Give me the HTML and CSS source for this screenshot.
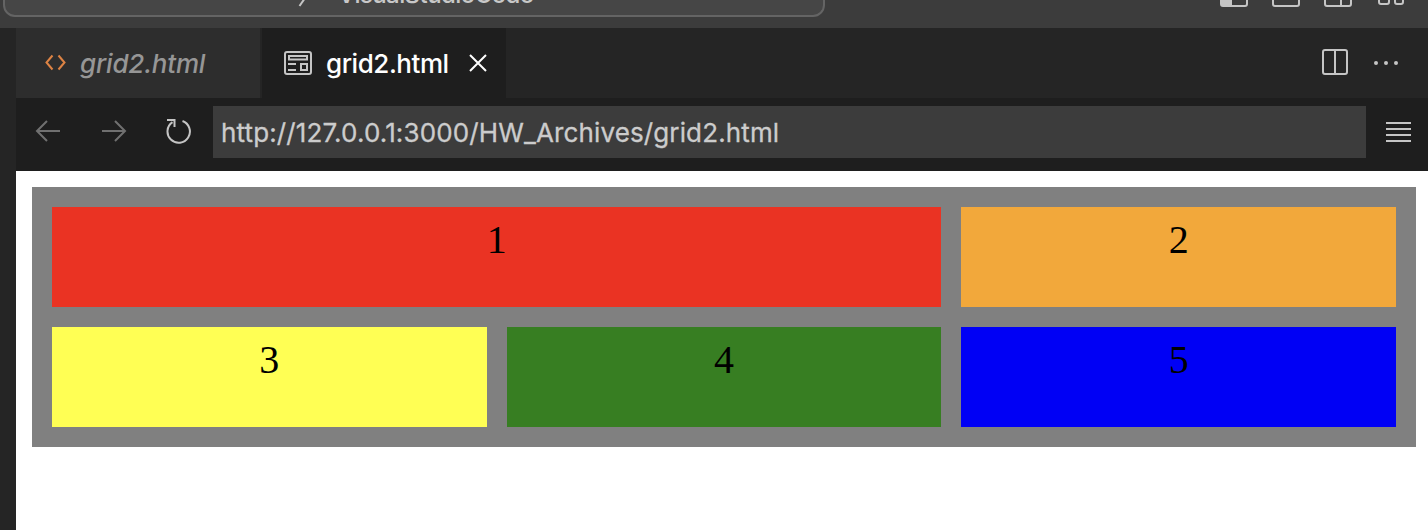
FILE: index.html
```html
<!DOCTYPE html>
<html lang="en">
<head>
<meta charset="utf-8">
<title>grid2.html</title>
<link rel="stylesheet" href="styles.css">
</head>
<body>
<header class="titlebar">
  <div class="command">
    <svg class="slash" width="20" height="28" viewBox="0 0 20 28"><path d="M3.500 27L16 9"/></svg>
    <span class="command-text">VisualStudioCode</span>
  </div>
  <div class="layout-icons">
    <svg width="28" height="28" viewBox="0 0 28 28"><rect x="1" y="1" width="26" height="26" rx="2"/><path class="solid" d="M1 1H12V27H1z"/></svg>
    <svg width="28" height="28" viewBox="0 0 28 28"><rect x="1" y="1" width="26" height="26" rx="2"/></svg>
    <svg width="28" height="28" viewBox="0 0 28 28"><rect x="1" y="1" width="26" height="26" rx="2"/><path d="M17 1V27"/></svg>
    <svg width="28" height="28" viewBox="0 0 28 28"><rect x="3" y="14" width="10" height="11" rx="2"/><rect x="19" y="14" width="8" height="11" rx="2"/></svg>
  </div>
</header>
<div class="workspace">
  <main class="editor">
    <div class="tabs">
      <div class="tab tab-preview">
        <svg class="code" width="22" height="18" viewBox="0 0 22 18"><path d="M8.500 1.500L2.500 8.500L8.500 15.500M14.500 1.500L20.500 8.500L14.500 15.500"/></svg>
        <span class="tab-label">grid2.html</span>
      </div>
      <div class="tab tab-active">
        <svg class="page" width="28" height="24" viewBox="0 0 28 24"><rect x="1" y="1" width="26" height="22" rx="2"/><path d="M5 5H23V8.500H5zM4 13H12M4 19H12M17 13H23V19H17z"/></svg>
        <span class="tab-label">grid2.html</span>
        <svg class="close" width="18" height="18" viewBox="0 0 18 18"><path d="M1 1L17 17M17 1L1 17"/></svg>
      </div>
      <div class="actions">
        <svg width="26" height="26" viewBox="0 0 26 26"><rect x="1" y="1" width="24" height="24" rx="2"/><path d="M13 1V25"/></svg>
        <svg width="26" height="26" viewBox="0 0 26 26"><g class="solid"><circle cx="3" cy="14" r="2"/><circle cx="13" cy="14" r="2"/><circle cx="23" cy="14" r="2"/></g></svg>
      </div>
    </div>
    <nav class="toolbar">
      <svg class="dim" width="26" height="24" viewBox="0 0 26 24"><path d="M25 12H2M12 2L2 12L12 22"/></svg>
      <svg class="dim" width="26" height="24" viewBox="0 0 26 24"><path d="M1 12H24M14 2L24 12L14 22"/></svg>
      <svg class="reload" width="26" height="26" viewBox="0 0 26 26"><path d="M1 2H8.500V9M6.500 4.200A11.200 11.200 0 1 0 16.500 3"/></svg>
      <div class="address">http://127.0.0.1:3000/HW_Archives/grid2.html</div>
      <svg class="menu" width="25" height="20" viewBox="0 0 25 20"><path d="M0 1H25M0 7H25M0 13H25M0 19H25"/></svg>
    </nav>
    <section class="preview">
      <div class="grid">
        <div class="cell red">1</div>
        <div class="cell orange">2</div>
        <div class="cell yellow">3</div>
        <div class="cell green">4</div>
        <div class="cell blue">5</div>
      </div>
    </section>
  </main>
</div>
</body>
</html>
```
FILE: styles.css
```css
* { box-sizing: border-box; }
body {
  margin: 0;
  height: 530px;
  overflow: hidden;
  display: flex;
  flex-direction: column;
  background: #252525;
  font-family: Inter, "Liberation Sans", sans-serif;
}
svg {
  display: block;
  flex: none;
  fill: none;
  stroke: #c5c5c5;
  stroke-width: 2;
}
.solid { fill: #c5c5c5; stroke: none; }
.titlebar {
  height: 28px;
  flex: none;
  overflow: hidden;
  display: flex;
  align-items: flex-start;
  justify-content: space-between;
  padding: 0 24px 0 3px;
  background: #3c3c3c;
}
.command {
  width: 822px;
  height: 44px;
  margin-top: -27px;
  border: 2px solid #646464;
  border-radius: 12px;
  background: #464646;
  display: flex;
  padding-left: 291px;
}
.slash { margin-top: 4px; }
.command-text {
  margin: 5px 0 0 22px;
  font-size: 24px;
  font-weight: 500;
  letter-spacing: -0.58px;
  line-height: 30px;
  color: #c8c8c8;
}
.layout-icons {
  display: flex;
  gap: 24px;
  margin-top: -21px;
}
.workspace { flex: 1; padding-left: 16px; }
.editor { height: 100%; display: flex; flex-direction: column; background: #1e1e1e; }
.tabs { height: 70px; flex: none; display: flex; background: #252525; }
.tab { display: flex; align-items: center; }
.tab-label {
  padding-top: 2px;
  font-size: 26px;
  font-weight: 500;
  letter-spacing: -0.45px;
  line-height: 34px;
  white-space: nowrap;
}
.tab-preview {
  width: 246px;
  padding: 0 0 0 28px;
  background: #2d2d2d;
  border-right: 2px solid #252525;
  color: #969696;
  font-style: italic;
}
.tab-preview .tab-label { letter-spacing: -0.2px; }
.code { stroke: #dd8344; margin-right: 14px; }
.tab-active { width: 244px; padding-left: 22px; background: #1e1e1e; color: #fff; }
.page { margin-right: 14px; }
.tab-active .tab-label { width: 125px; }
.close { stroke: #fff; margin-left: 18px; }
.actions { margin-left: auto; padding: 21px 29px 0 0; display: flex; gap: 25px; }
.toolbar { height: 73px; flex: none; display: flex; padding: 8px 17px 0 19px; }
.dim { stroke: #707070; margin: 13px 40px 0 0; }
.reload { margin: 12px 21px 0 -1px; }
.address {
  flex: 1;
  height: 52px;
  padding: 1px 0 0 8px;
  margin-right: 20px;
  background: #3c3c3c;
  color: #ccc;
  font-size: 26px;
  letter-spacing: 0.13px;
  line-height: 52px;
  white-space: nowrap;
  -webkit-text-stroke: 0.3px #ccc;
}
.menu { margin-top: 16px; }
.preview { flex: 1; background: #fff; padding: 16px 12px 0 16px; }
.grid {
  display: grid;
  grid-template-columns: repeat(3, 1fr);
  grid-template-rows: 100px 100px;
  gap: 20px;
  padding: 20px;
  background: #808080;
}
.cell {
  padding-top: 10px;
  text-align: center;
  font-family: "Liberation Serif", serif;
  font-size: 40px;
  line-height: 46px;
  color: #000;
}
.red { grid-column: span 2; background: #ea3323; }
.orange { background: #f2a83b; }
.yellow { background: #ffff54; }
.green { background: #377e22; }
.blue { background: #0000f5; }
```
